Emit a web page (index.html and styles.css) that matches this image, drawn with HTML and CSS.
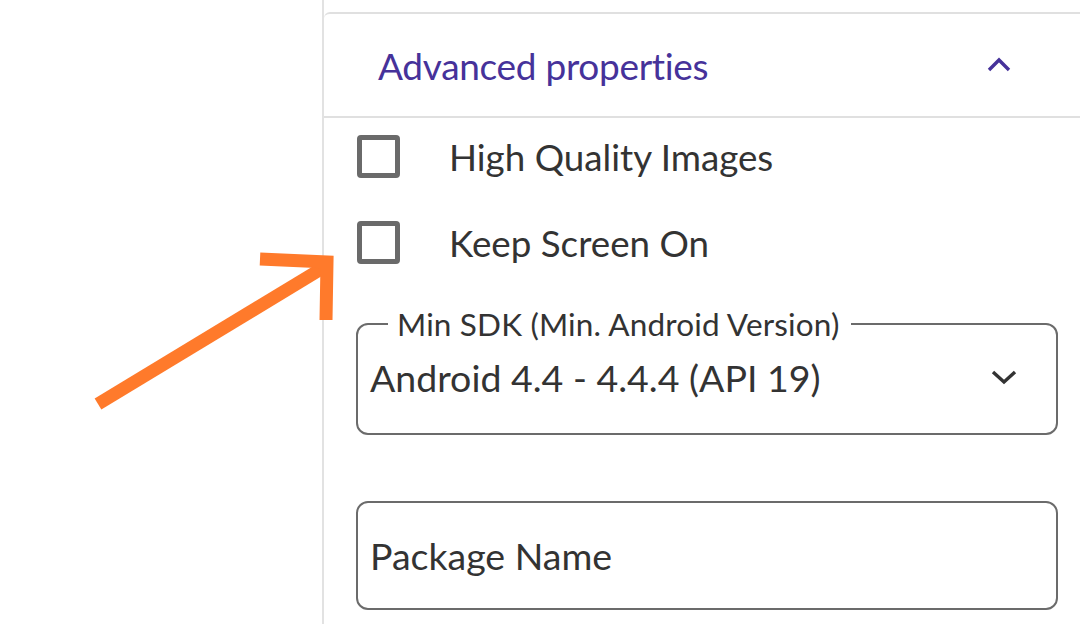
FILE: index.html
```html
<!DOCTYPE html>
<html>
<head>
<meta charset="utf-8">
<link rel="stylesheet" href="styles.css">
</head>
<body>
<div class="page">
  <div class="left"></div>
  <div class="panel">
    <div class="spacer"></div>
    <div class="acc-header">
      <span class="acc-title">Advanced properties</span>
      <svg class="chev-up" width="26" height="18" viewBox="0 0 26 18"><path d="M3 15 L13 5 L23 15" fill="none" stroke="#46329a" stroke-width="3.4"/></svg>
    </div>
    <div class="acc-body">
      <label class="check-row"><span class="box"></span><span class="check-text">High Quality Images</span></label>
      <label class="check-row"><span class="box"></span><span class="check-text">Keep Screen On</span></label>
      <fieldset class="field select-field">
        <legend class="field-label">Min SDK (Min. Android Version)</legend>
        <div class="field-row">
          <span class="field-value">Android 4.4 - 4.4.4 (API 19)</span>
          <svg class="chev-down" width="28" height="18" viewBox="0 0 28 18"><path d="M3 4 L14 14 L25 4" fill="none" stroke="#333" stroke-width="3.4"/></svg>
        </div>
      </fieldset>
      <div class="field text-field">
        <span class="field-value">Package Name</span>
      </div>
    </div>
  </div>
</div>
<svg class="arrow" width="1080" height="624" viewBox="0 0 1080 624">
  <g fill="none" stroke="#ff7a2b" stroke-width="13">
    <path d="M98 404 L326 266"/>
    <path d="M260 259 L327 262 L326 320"/>
  </g>
</svg>
</body>
</html>
```

FILE: styles.css
```css
html, body {
  margin: 0;
  padding: 0;
  background: #ffffff;
}
body {
  width: 1080px;
  height: 624px;
  overflow: hidden;
  position: relative;
  font-family: "Lato", "Liberation Sans", sans-serif;
  color: #333333;
}
.page {
  display: flex;
  height: 624px;
}
.left {
  width: 322px;
  flex: none;
}
.panel {
  flex: 1;
  border-left: 2px solid #e2e2e2;
  display: flex;
  flex-direction: column;
}
.spacer {
  height: 12px;
}
.acc-header {
  height: 102px;
  border-top: 2px solid #e0e0e0;
  border-bottom: 2px solid #e0e0e0;
  border-top-left-radius: 6px;
  display: flex;
  align-items: center;
  justify-content: space-between;
  padding: 0 68px 0 54px;
}
.acc-title {
  font-size: 37px;
  color: #46329a;
  letter-spacing: -0.3px;
}
.chev-up {
  display: block;
  margin-top: -2px;
}
.acc-body {
  padding: 17px 22px 0 32px;
  display: flex;
  flex-direction: column;
}
.check-row {
  display: flex;
  align-items: center;
  height: 43px;
  margin-bottom: 43px;
}
.box {
  width: 33px;
  height: 33px;
  border: 5px solid #6a6a6a;
  border-radius: 4px;
  flex: none;
  margin-left: 1px;
}
.check-text {
  margin-left: 49px;
  font-size: 36.75px;
  color: #333333;
}
.field {
  box-sizing: border-box;
  width: 702px;
  border: 2px solid #6b6b6b;
  border-radius: 12px;
  margin: 0;
}
.select-field {
  height: 130px;
  margin-top: -2px;
  padding: 0 38px 0 12px;
}
.field-label {
  font-size: 31.5px;
  color: #333333;
  padding: 0 12px 0 9px;
  margin-left: 18px;
  letter-spacing: 0.15px;
}
.field-row {
  display: flex;
  align-items: center;
  justify-content: space-between;
  height: 74px;
  margin-top: -3px;
}
.field-value {
  font-size: 37.5px;
  color: #333333;
}
.chev-down {
  display: block;
}
.text-field {
  margin-top: 66px;
  height: 109px;
  display: flex;
  align-items: center;
  padding-left: 12px;
}
.arrow {
  position: absolute;
  left: 0;
  top: 0;
  pointer-events: none;
}
```
